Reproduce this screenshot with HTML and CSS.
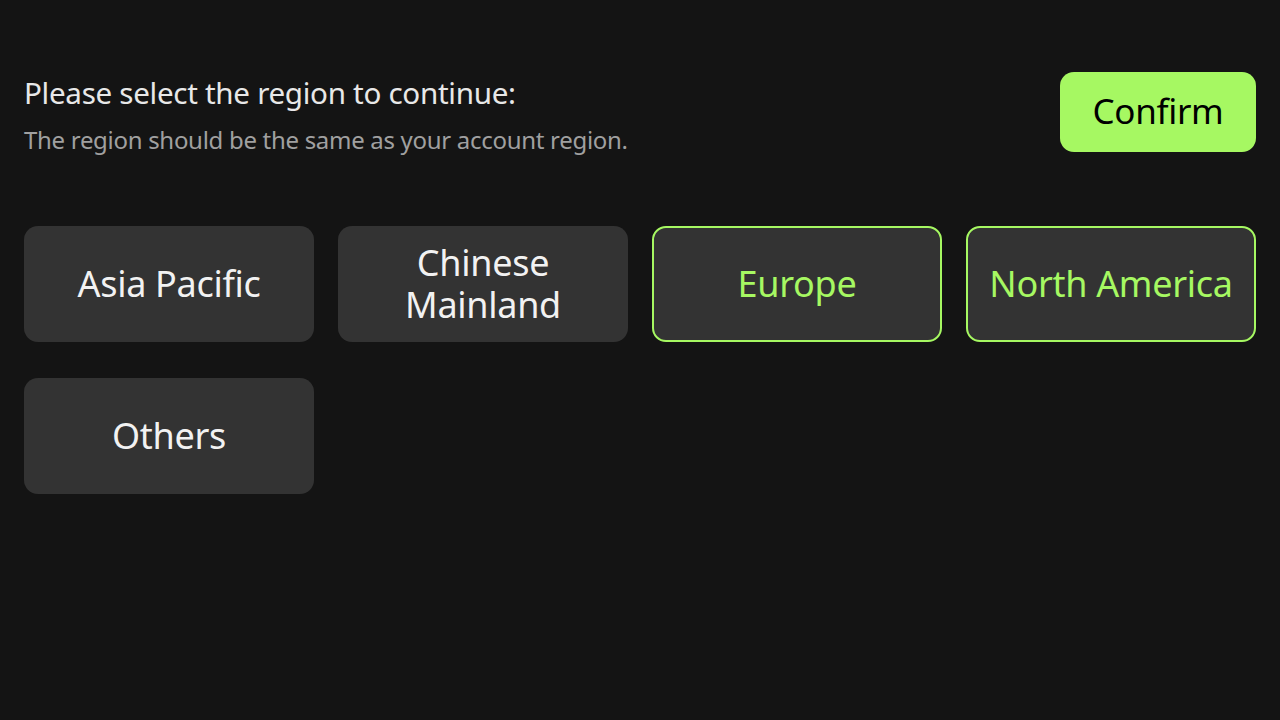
FILE: index.html
```html
<!DOCTYPE html>
<html lang="en">
<head>
<meta charset="utf-8">
<link rel="stylesheet" href="styles.css">
<title>Select region</title>
</head>
<body>
<main class="page">
  <header class="head">
    <div class="texts">
      <h1 class="title">Please select the region to continue:</h1>
      <p class="sub">The region should be the same as your account region.</p>
    </div>
    <button class="confirm">Confirm</button>
  </header>
  <section class="grid">
    <div class="card">Asia Pacific</div>
    <div class="card"><span class="narrow">Chinese Mainland</span></div>
    <div class="card selected">Europe</div>
    <div class="card selected">North America</div>
    <div class="card">Others</div>
  </section>
</main>
</body>
</html>
```
FILE: styles.css
```css
html, body {
  margin: 0;
  padding: 0;
  background: #141414;
  width: 1280px;
  height: 720px;
  overflow: hidden;
  font-family: "Noto Sans", "Liberation Sans", sans-serif;
}
.page {
  padding: 72px 24px 0 24px;
}
.head {
  display: flex;
  justify-content: space-between;
  align-items: flex-start;
  height: 80px;
}
.texts {
  display: flex;
  flex-direction: column;
}
.title {
  margin: 0;
  padding-top: 1px;
  font-size: 29.6px;
  font-weight: 400;
  line-height: 40px;
  color: #e8e8e8;
  letter-spacing: -0.3px;
}
.sub {
  margin: 11px 0 0 0;
  font-size: 24px;
  line-height: 32px;
  color: #a0a0a0;
  letter-spacing: -0.3px;
}
.confirm {
  width: 196px;
  height: 80px;
  border: none;
  border-radius: 14px;
  background: #a6f862;
  color: #000;
  font-family: inherit;
  font-size: 35px;
  padding: 0 0 4px 0;
  letter-spacing: -0.3px;
}
.grid {
  margin-top: 74px;
  display: grid;
  grid-template-columns: repeat(4, 290px);
  column-gap: 24px;
  row-gap: 36px;
}
.card {
  height: 116px;
  box-sizing: border-box;
  border-radius: 14px;
  background: #333333;
  color: #f2f2f2;
  font-size: 36px;
  line-height: 42px;
  display: flex;
  align-items: center;
  justify-content: center;
  text-align: center;
  letter-spacing: -0.3px;
}
.narrow {
  display: block;
  width: 180px;
}
.selected {
  border: 2px solid #a6f862;
  color: #a6f862;
}
```
